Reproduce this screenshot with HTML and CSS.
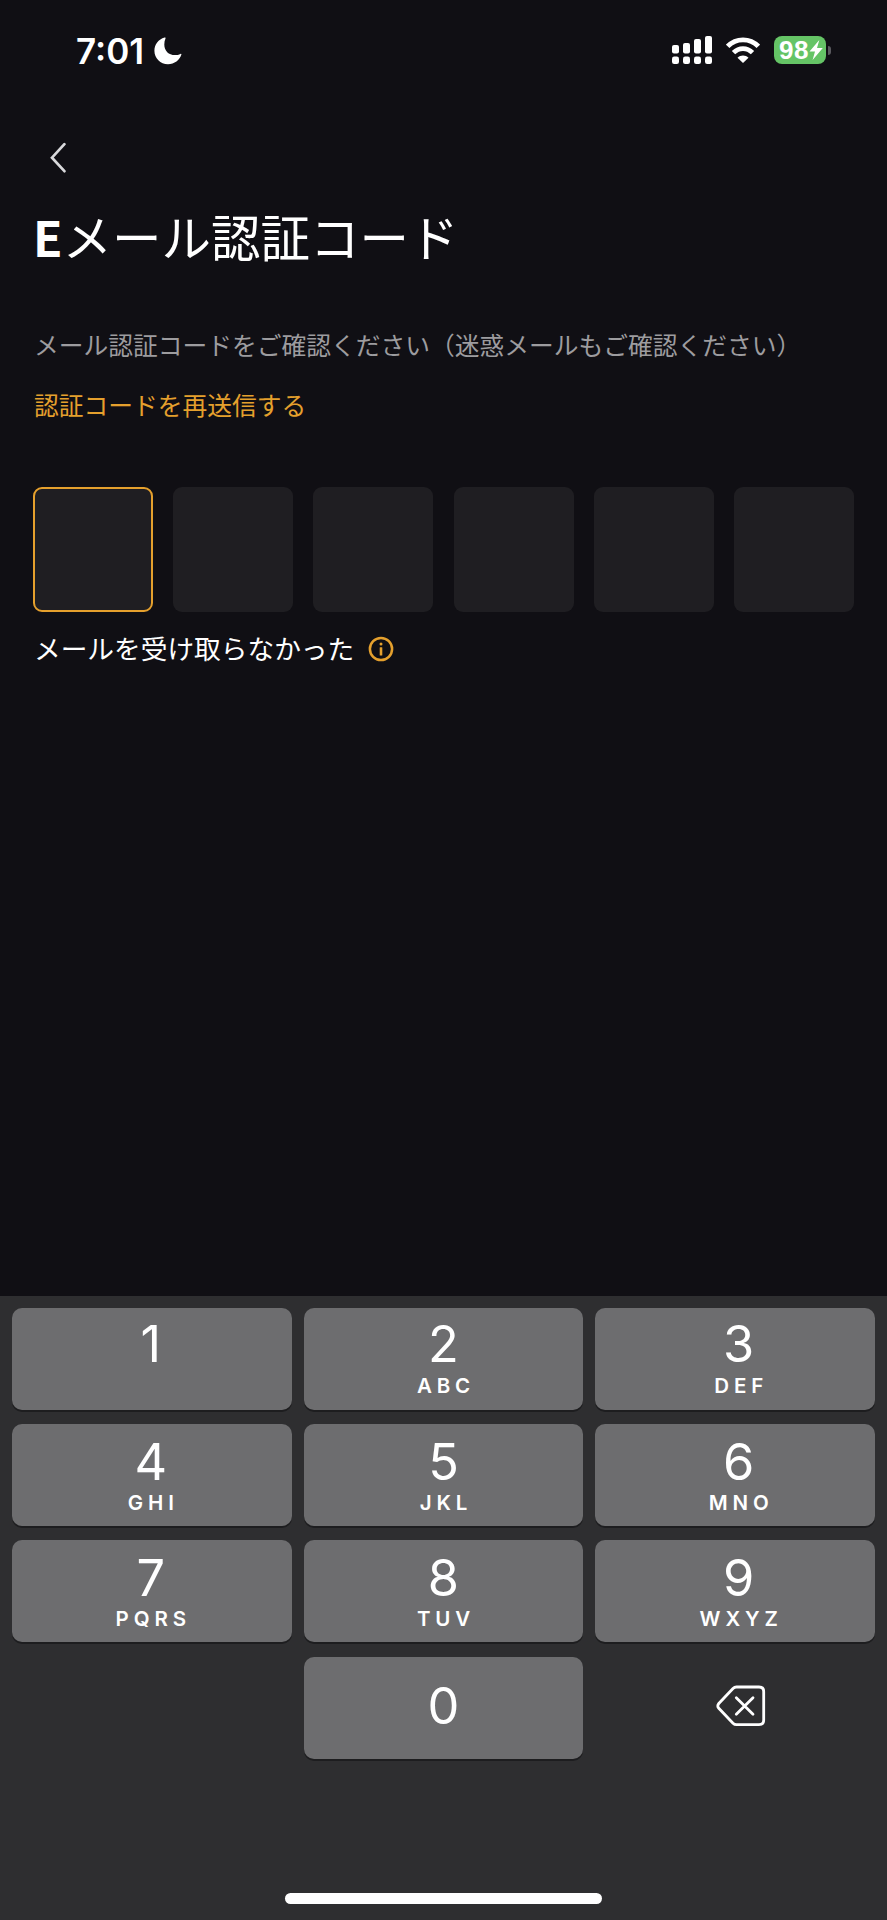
FILE: index.html
```html
<!DOCTYPE html>
<html lang="ja">
<head>
<meta charset="utf-8">
<title>Eメール認証コード</title>
<link rel="stylesheet" href="styles.css">
</head>
<body>
<div class="screen">
  <header class="status">
    <div class="status-left">
      <span class="time">7:01</span>
      <svg class="moon" viewBox="0 0 28 28"><path d="M10.6 0.6C4.4 2.4 0.4 7.6 0.4 13.8C0.4 21.4 6.4 27.2 14 27.2C20.4 27.2 25.8 23.2 27.4 17.6C27.6 17 27.1 16.6 26.5 16.9C24.800 17.700 23 18.100 21 18.100C14.600 18.100 10.300 13.800 10.300 7.500C10.300 5.300 10.700 3.300 11.500 1.500C11.800 0.900 11.300 0.400 10.600 0.600Z"/></svg>
    </div>
    <div class="status-right">
      <svg class="signal" viewBox="0 0 40 28">
        <rect x="0" y="9" width="7" height="8.500" rx="2"/><rect x="11" y="7" width="7" height="10.500" rx="2"/><rect x="22" y="3" width="7" height="14.500" rx="2"/><rect x="33" y="0" width="7" height="17.500" rx="2"/>
        <rect x="0" y="20.500" width="7" height="7.500" rx="2.200"/><rect x="11" y="20.500" width="7" height="7.500" rx="2.200"/><rect x="22" y="20.500" width="7" height="7.500" rx="2.200"/><rect x="33" y="20.500" width="7" height="7.500" rx="2.200"/>
      </svg>
      <svg class="wifi" viewBox="0 0 34 26">
        <path class="arc" d="M1.700 9.300C10 0.600 24 0.600 32.300 9.300"/>
        <path class="arc" d="M7.500 15.600C13 10.200 21 10.200 26.500 15.600"/>
        <path d="M17 26L11.500 20.700C14.500 17.700 19.500 17.700 22.500 20.700Z"/>
      </svg>
      <div class="battery">
        <div class="battery-body"><span>98</span><svg class="bolt" viewBox="0 0 14 20"><path d="M10.300 0L0.500 11.500H6L3.600 20L13.800 8H8Z"/></svg></div>
        <div class="battery-cap"></div>
      </div>
    </div>
  </header>

  <nav class="nav"><svg class="back" viewBox="0 0 16 32"><path d="M14.400 2.200L2 15.700L14.400 29.200"/></svg></nav>

  <main class="content">
    <h1 class="title"><span class="latin">E</span>メール認証コード</h1>
    <p class="hint">メール認証コードをご確認ください（迷惑メールもご確認ください）</p>
    <a class="resend">認証コードを再送信する</a>
    <div class="code">
      <div class="cell active"></div><div class="cell"></div><div class="cell"></div><div class="cell"></div><div class="cell"></div><div class="cell"></div>
    </div>
    <div class="missing">
      <span>メールを受け取らなかった</span>
      <svg class="info" viewBox="0 0 26 26"><circle class="ring" cx="13" cy="13" r="11.100"/><circle cx="13" cy="7.900" r="1.500"/><rect x="11.700" y="11.200" width="2.600" height="8.200" rx="0.500"/></svg>
    </div>
  </main>

  <section class="keyboard">
    <div class="keys">
      <div class="key first left"><span class="digit">1</span></div>
      <div class="key first"><span class="digit">2</span><span class="letters">ABC</span></div>
      <div class="key first right"><span class="digit">3</span><span class="letters">DEF</span></div>
      <div class="key left"><span class="digit">4</span><span class="letters">GHI</span></div>
      <div class="key"><span class="digit">5</span><span class="letters">JKL</span></div>
      <div class="key right"><span class="digit">6</span><span class="letters">MNO</span></div>
      <div class="key left"><span class="digit">7</span><span class="letters">PQRS</span></div>
      <div class="key"><span class="digit">8</span><span class="letters">TUV</span></div>
      <div class="key right"><span class="digit">9</span><span class="letters">WXYZ</span></div>
      <div class="blank"></div>
      <div class="key zero"><span class="digit">0</span></div>
      <div class="blank"><svg class="delete" viewBox="0 0 50 42"><path d="M20.500 2H43Q47.700 2 47.700 6.700V35Q47.700 39.700 43 39.700H20.500Q18.500 39.700 17 38.200L2.800 23.300Q0.800 20.900 2.800 18.500L17 3.500Q18.500 2 20.500 2Z"/><path d="M20.300 12.700L37 29.300M37 12.700L20.300 29.300"/></svg></div>
    </div>
    <div class="home"></div>
  </section>
</div>
</body>
</html>
```
FILE: styles.css
```css
* { box-sizing: border-box; }

body {
  margin: 0;
  background: #100f14;
  color: #fff;
  font-family: Inter, "Noto Sans CJK JP", sans-serif;
}

svg { display: block; flex: none; fill: #fff; }

.screen {
  display: flex;
  flex-direction: column;
  width: 887px;
  height: 1920px;
  overflow: hidden;
}

.status {
  display: flex;
  justify-content: space-between;
  height: 100px;
  padding: 36px 56px 0 76px;
}

.status-left, .status-right { display: flex; align-items: flex-start; }

.time {
  width: 78px;
  font-size: 35px;
  font-weight: 600;
  line-height: 30px;
}

.moon { width: 28px; height: 28px; margin-top: 1px; }
.signal { width: 40px; height: 28px; }
.wifi { width: 34px; height: 26px; margin: 1px 14px 0 14px; }
.arc { fill: none; stroke: #fff; stroke-width: 4.800px; }

.battery { display: flex; align-items: center; gap: 2px; }

.battery-body {
  display: flex;
  align-items: center;
  width: 52px;
  height: 28px;
  padding-left: 5px;
  border-radius: 8px;
  background: #65c466;
  font-family: "Liberation Sans", Arial, sans-serif;
  font-size: 26px;
  font-weight: 700;
  line-height: 30px;
  letter-spacing: 0.500px;
}

.bolt { width: 14px; height: 20px; }
.battery-cap { width: 3px; height: 9px; border-radius: 0 3px 3px 0; background: #5b5a5f; }

.nav { height: 100px; padding: 42px 0 0 50px; }
.back { width: 16px; height: 32px; fill: none; stroke: #d9d9dc; stroke-width: 2.700px; stroke-linecap: round; }

.content { flex: 1; padding: 0 33px; }

.title {
  margin: 0;
  font-size: 49.500px;
  font-weight: 400;
  line-height: 79px;
  white-space: nowrap;
}

.latin {
  display: inline-block;
  width: 29.500px;
  font-family: "Noto Sans CJK JP", sans-serif;
  font-size: 48px;
  font-weight: 700;
  line-height: 1;
}

.hint, .resend {
  display: block;
  margin: 0 0 0 1px;
  font-size: 24.750px;
  line-height: 40px;
  white-space: nowrap;
}

.hint { margin-top: 47px; color: #9d9c9f; }
.resend { margin-top: 20px; color: #e5a02d; }

.code {
  display: grid;
  grid-template-columns: repeat(6, 1fr);
  gap: 20.400px;
  margin-top: 61px;
}

.cell { height: 125px; border-radius: 9px; background: #1f1e22; }
.cell.active { border: 2px solid #e5a02d; }

.missing {
  display: flex;
  align-items: center;
  gap: 14px;
  margin: 16px 0 0 1px;
  font-size: 26.700px;
  line-height: 42px;
}

.missing svg { width: 26px; height: 26px; margin-top: -1px; fill: #e5a02d; }
.info .ring { fill: none; stroke: #e5a02d; stroke-width: 2.500px; }

.keyboard {
  display: flex;
  flex-direction: column;
  justify-content: space-between;
  align-items: center;
  height: 624px;
  padding: 12px 12px 16px;
  background: #2e2e30;
}

.keys {
  display: grid;
  grid-template-columns: repeat(3, 1fr);
  grid-auto-rows: 102px;
  gap: 14.200px 12.200px;
  width: 100%;
}

.key {
  display: flex;
  flex-direction: column;
  align-items: center;
  padding-top: 7px;
  border-radius: 10px;
  background: #6d6d6f;
  box-shadow: 0 2px 0 #1d1d1f;
}

.key.left { padding-right: 2px; }
.key.right { padding-left: 7px; }
.key.first { padding-top: 5px; }
.key.zero { padding-top: 18px; }

.digit { font-size: 50.500px; line-height: 61px; }

.letters {
  margin-right: -5px;
  font-size: 20.500px;
  font-weight: 600;
  line-height: 21px;
  letter-spacing: 4.900px;
}

.first .letters { margin-top: 1px; }

.blank { display: flex; align-items: center; justify-content: center; }
.delete { width: 50px; height: 42px; margin: -4px 0 0 11px; fill: none; stroke: #fff; stroke-width: 2.800px; stroke-linecap: round; }

.home { width: 317px; height: 11px; border-radius: 6px; background: #fff; }
```
